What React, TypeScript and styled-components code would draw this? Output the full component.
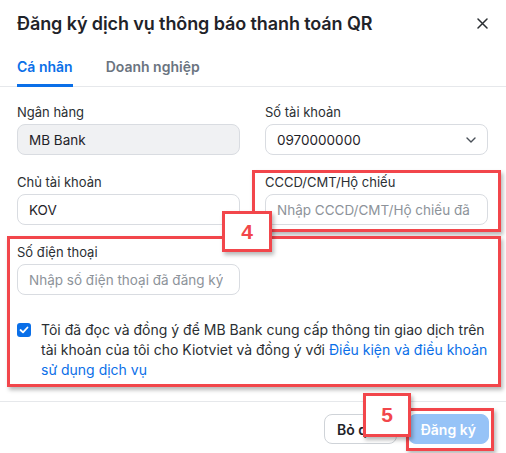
import styled, { createGlobalStyle } from "styled-components";

const GlobalStyle = createGlobalStyle`
  body {
    margin: 0;
    background: #fff;
    font-family: Inter, "Noto Sans", sans-serif;
    color: #1f2329;
  }
`;

const annotationRed = "#f2464b";

const Dialog = styled.div`
  position: relative;
  width: 506px;
  height: 453px;
  background: #fff;
  overflow: hidden;
`;

const Header = styled.div`
  display: flex;
  align-items: center;
  justify-content: space-between;
  height: 44px;
  padding: 2px 17px 0;
  box-sizing: border-box;
`;

const Title = styled.h2`
  margin: 0;
  font-size: 18px;
  font-weight: 600;
  color: #1f2329;
  letter-spacing: -0.1px;
`;

const CloseButton = styled.button`
  border: none;
  background: none;
  padding: 0;
  width: 14px;
  height: 14px;
  display: flex;
  align-items: center;
  justify-content: center;
  cursor: pointer;
`;

const Tabs = styled.div`
  display: flex;
  gap: 33px;
  padding: 0 17px;
  border-bottom: 1px solid #e6e8eb;
`;

const Tab = styled.div<{ $active?: boolean }>`
  padding: 13px 0 7px;
  font-size: 14px;
  line-height: 20px;
  font-weight: 600;
  color: ${(p) => (p.$active ? "#0a6fe8" : "#6b7480")};
  border-bottom: 3px solid ${(p) => (p.$active ? "#0a6fe8" : "transparent")};
  margin-bottom: -1px;
`;

const Body = styled.div`
  padding: 16px 17px 21px;
`;

const FormGrid = styled.div`
  display: grid;
  grid-template-columns: 223px 223px;
  column-gap: 25px;
  row-gap: 18px;
`;

const Field = styled.div`
  display: flex;
  flex-direction: column;
  gap: 3px;
  min-width: 0;
`;

const Label = styled.label`
  font-size: 13px;
  line-height: 18px;
  color: #2b2f33;
`;

const InputBox = styled.div<{ $disabled?: boolean; $placeholder?: boolean }>`
  display: flex;
  align-items: center;
  justify-content: space-between;
  height: 31px;
  box-sizing: border-box;
  padding: 0 11px;
  border: 1px solid #d9dce1;
  border-radius: 8px;
  background: ${(p) => (p.$disabled ? "#f0f1f3" : "#fff")};
  font-size: 13.5px;
  color: ${(p) => (p.$placeholder ? "#8d939a" : "#1f2329")};
  white-space: nowrap;
  overflow: hidden;
`;

const InputText = styled.span`
  overflow: hidden;
  text-overflow: clip;
  white-space: nowrap;
`;

const Agreement = styled.div`
  display: flex;
  gap: 10px;
  margin-top: 25px;
`;

const Checkbox = styled.span`
  flex: none;
  width: 14px;
  height: 14px;
  margin-top: 3px;
  border-radius: 3px;
  background: #0a6fe8;
  display: flex;
  align-items: center;
  justify-content: center;
`;

const AgreementText = styled.p`
  margin: 0;
  font-size: 14px;
  line-height: 20px;
  color: #2b2f33;
`;

const Link = styled.a`
  color: #0a6fe8;
  text-decoration: none;
`;

const Footer = styled.div`
  display: flex;
  justify-content: flex-end;
  gap: 11px;
  padding: 12px 17px;
  border-top: 1px solid #e6e8eb;
`;

const Button = styled.button`
  height: 30px;
  padding: 0 12px;
  border-radius: 8px;
  font-family: inherit;
  font-size: 14px;
  font-weight: 600;
  border: 1px solid #cfd3d8;
  background: #fff;
  color: #1f2329;
`;

const PrimaryButton = styled(Button)`
  border-color: #96c3f7;
  background: #96c3f7;
  color: #fff;
`;

const Highlight = styled.div<{ $x: number; $y: number; $w: number; $h: number }>`
  position: absolute;
  left: ${(p) => p.$x}px;
  top: ${(p) => p.$y}px;
  width: ${(p) => p.$w}px;
  height: ${(p) => p.$h}px;
  box-sizing: border-box;
  border: 3px solid ${annotationRed};
  box-shadow: 2px 3px 4px rgba(0, 0, 0, 0.28);
  pointer-events: none;
`;

const StepBadge = styled(Highlight)`
  background: #fff;
  display: flex;
  align-items: center;
  justify-content: center;
  font-family: "Liberation Sans", Arial, sans-serif;
  font-size: 21px;
  font-weight: 700;
  color: ${annotationRed};
`;

const ChevronDown = () => (
  <svg width="10" height="6" viewBox="0 0 10 6" fill="none">
    <path d="M1 1l4 4 4-4" stroke="#4a5058" strokeWidth="1.4" strokeLinecap="round" strokeLinejoin="round" />
  </svg>
);

const CloseIcon = () => (
  <svg width="11" height="11" viewBox="0 0 11 11" fill="none">
    <path d="M1 1l9 9M10 1l-9 9" stroke="#2b2f33" strokeWidth="1.5" strokeLinecap="round" />
  </svg>
);

const CheckIcon = () => (
  <svg width="10" height="8" viewBox="0 0 10 8" fill="none">
    <path d="M1.5 4l2.5 2.4L8.5 1.5" stroke="#fff" strokeWidth="1.8" strokeLinecap="round" strokeLinejoin="round" />
  </svg>
);

const App = () => {
  return (
    <Dialog>
      <GlobalStyle />
      <Header>
        <Title>Đăng ký dịch vụ thông báo thanh toán QR</Title>
        <CloseButton aria-label="Đóng">
          <CloseIcon />
        </CloseButton>
      </Header>
      <Tabs>
        <Tab $active>Cá nhân</Tab>
        <Tab>Doanh nghiệp</Tab>
      </Tabs>
      <Body>
        <FormGrid>
          <Field>
            <Label>Ngân hàng</Label>
            <InputBox $disabled>MB Bank</InputBox>
          </Field>
          <Field>
            <Label>Số tài khoản</Label>
            <InputBox>
              0970000000
              <ChevronDown />
            </InputBox>
          </Field>
          <Field>
            <Label>Chủ tài khoản</Label>
            <InputBox>KOV</InputBox>
          </Field>
          <Field>
            <Label>CCCD/CMT/Hộ chiếu</Label>
            <InputBox $placeholder>
              <InputText>Nhập CCCD/CMT/Hộ chiếu đã</InputText>
            </InputBox>
          </Field>
          <Field>
            <Label>Số điện thoại</Label>
            <InputBox $placeholder>
              <InputText>Nhập số điện thoại đã đăng ký</InputText>
            </InputBox>
          </Field>
        </FormGrid>
        <Agreement>
          <Checkbox>
            <CheckIcon />
          </Checkbox>
          <AgreementText>
            Tôi đã đọc và đồng ý để MB Bank cung cấp thông tin giao dịch trên tài khoản của tôi cho
            Kiotviet và đồng ý với <Link>Điều kiện và điều khoản sử dụng dịch vụ</Link>
          </AgreementText>
        </Agreement>
      </Body>
      <Footer>
        <Button>Bỏ qua</Button>
        <PrimaryButton>Đăng ký</PrimaryButton>
      </Footer>

      <Highlight $x={252} $y={170} $w={249} $h={62} />
      <Highlight $x={7} $y={236} $w={494} $h={151} />
      <StepBadge $x={222} $y={211} $w={50} $h={41}>4</StepBadge>
      <Highlight $x={406} $y={408} $w={88} $h={43} />
      <StepBadge $x={363} $y={393} $w={48} $h={44}>5</StepBadge>
    </Dialog>
  );
};

export default App;
